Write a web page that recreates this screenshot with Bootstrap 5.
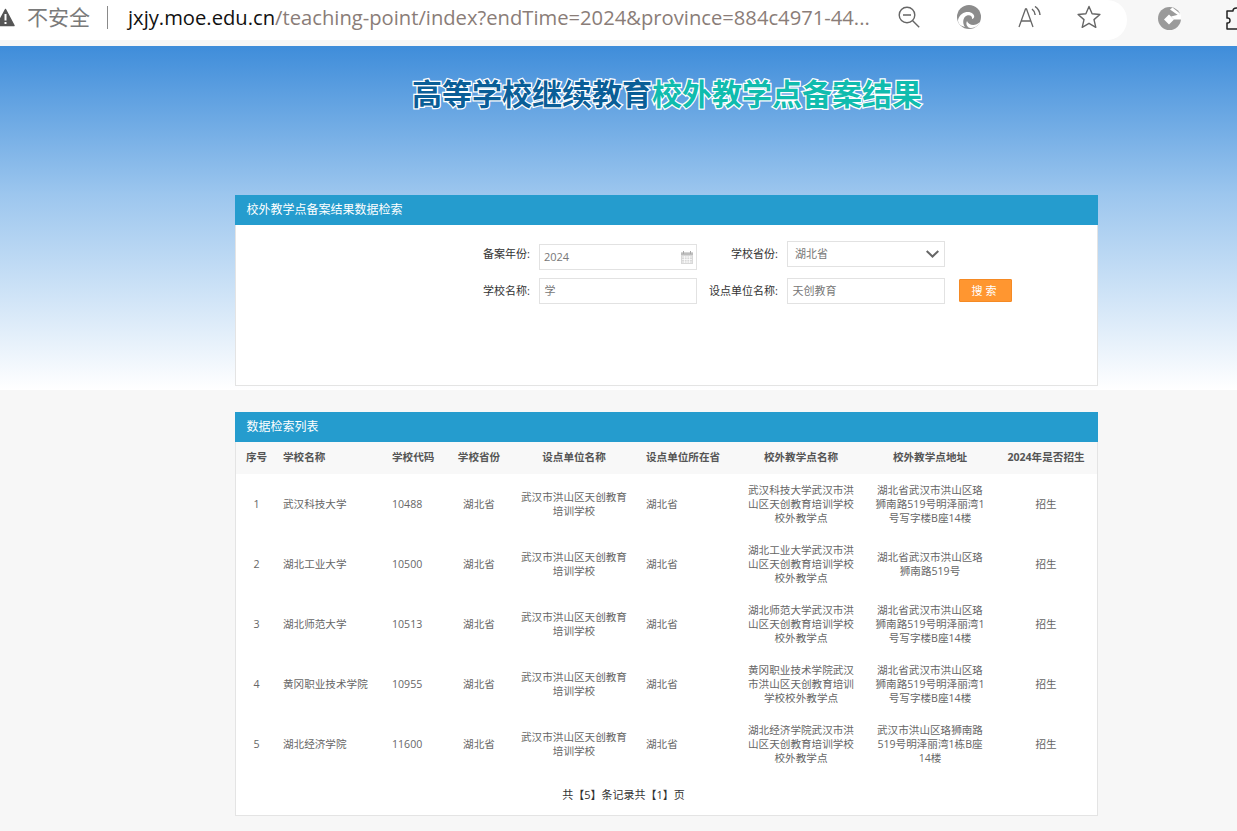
<!DOCTYPE html>
<html lang="zh-CN">
<head>
<meta charset="utf-8">
<title>校外教学点备案结果</title>
<link href="https://cdn.jsdelivr.net/npm/bootstrap@5.3.0/dist/css/bootstrap.min.css" rel="stylesheet">
<style>
html,body{height:100%}
body{margin:0;background:#f7f7f7;font-family:"Open Sans","Noto Sans CJK SC",sans-serif;font-size:11px;color:#666;overflow:hidden}
.chrome{height:46px;background:#f7f7f7;overflow:hidden}
.pill{width:1127px;height:40px;background:#fff;border-radius:0 20px 20px 0;flex:none;padding-bottom:6px}
.warn{margin-left:-4px;flex:none}
.secure{font-size:21px;color:#7a7a7a;margin-left:12px;white-space:nowrap;line-height:1}
.divbar{width:1px;height:23px;background:#8a8a8a;margin:0 20px 0 17px;flex:none}
.url{font-size:20.2px;color:#8a7d78;white-space:nowrap;width:770px;flex:none;line-height:1}
.url b{font-weight:400;color:#111}
.tool-i{display:block;flex:none}
.gap-edge{margin-left:37px}
.gap-read{margin-left:37px}
.gap-star{margin-left:36px}
.gap-bank{margin:7px 0 0 31px}
.gap-puz{margin:7px 0 0 44px}
.hero{height:344px;background:linear-gradient(#3f8dda 0,#9cc6ee 43%,#ffffff 100%)}
.hero-title{height:149px;padding:24px 0 0 97px;text-align:center;font:700 30px/44px "Noto Sans CJK SC",sans-serif;paint-order:stroke fill;-webkit-text-stroke:2.5px #fff;color:#0a5e97;white-space:nowrap}
.hero-title span{color:#10bcae}
.frame{width:863px;margin-left:235px}
.bar{height:30px;background:#259cce;color:#fff;font-size:12px;line-height:30px;padding-left:11.5px}
.search-box{height:161px;background:#fff;border:1px solid #e4e4e4;border-top:0;padding:16px 0 0 194px}
.frow{display:flex;align-items:flex-start;height:37px;color:#333}
.lab1{width:100px;text-align:right;margin-right:9px;line-height:26px}
.lab2{width:81px;text-align:right;margin-right:9px;line-height:26px}
.fld{width:158px;height:26px;border:1px solid #e2e2e2;background:#fff;color:#777;font-size:11px;line-height:24px;padding:0 4.5px;flex:none}
.fld.drop{padding:0 5px 0 7px}
.fld.dated{padding:0 3px 0 4px}
.down3{margin-top:3px}
.go{width:53px;height:23px;border:1px solid #f58a24;background:#ff9630;color:#fff;font-size:11px;line-height:21px;text-align:center;margin-left:14px;margin-top:1px;border-radius:1px;letter-spacing:3px;padding:0}
.result-wrap{margin-top:22px}
.result-box{height:374px;background:#fff;border:1px solid #e4e4e4;border-top:0}
.grid-t{width:861px;table-layout:fixed;border-collapse:collapse;margin:0;font-size:10.6px;color:#666}
.grid-t th{height:32px;background:#f8f8f8;font-size:10.6px;font-weight:700;color:#555;vertical-align:middle;padding:0;white-space:nowrap}
.grid-t td{height:60px;vertical-align:middle;line-height:14px;padding:0 10px;background:#fff;border:0;color:#666}
.cc{text-align:center}
.ll{text-align:left;padding-left:10px!important}
.grid-t .first{padding-left:4px;padding-right:0}
.grid-t .prov{text-align:left;padding-left:8px;padding-right:0}
.pager{text-align:center;color:#333;font-size:11px;line-height:16px;padding:13px 86px 0 0}
</style>
</head>
<body>
<div class="chrome d-flex align-items-start">
  <div class="pill d-flex align-items-center">
    <svg class="warn" width="19" height="19" viewBox="0 0 19 19"><path d="M9.500 1.500 18 17.500H1Z" fill="#555" stroke="#555" stroke-width="1.500" stroke-linejoin="round"/><rect x="8.500" y="6" width="2" height="6.500" fill="#fff"/><rect x="8.500" y="14" width="2" height="2" fill="#fff"/></svg>
    <span class="secure">不安全</span>
    <span class="divbar"></span>
    <span class="url"><b>jxjy.moe.edu.cn</b>/teaching-point/index?endTime=2024&amp;province=884c4971-44...</span>
    <svg class="tool-i" width="22" height="22" viewBox="0 0 22 22" fill="none" stroke="#666" stroke-width="1.4"><circle cx="9" cy="9" r="7.800"/><path d="M5 9h8M14.700 14.700l6.500 6.500"/></svg>
    <svg class="tool-i gap-edge" width="24" height="24" viewBox="0 0 24 24"><circle cx="12" cy="12" r="12" fill="#8c8c8c"/><path d="M1 15C3 7 12 5 16 9c2 2 1.500 4.500-1 5 .5-3-2-4.500-5-3.500C6 12 5 18 8 22c-4-1-7-3-7-7Z" fill="#fff"/><path d="M10 16c1 4 8 6 13 1l-1 2c-3 4-9 5-11 3-2-2-2-4-1-6Z" fill="#fff"/></svg>
    <svg class="tool-i gap-read" width="23" height="22" viewBox="0 0 23 22" fill="none" stroke="#666" stroke-width="1.300"><path d="M1 21 7.500 3h1L15 21M3.500 15h9"/><path d="M14 3c2 1.500 3 3.500 3.200 6M17 0.500c3 2 4.700 5 5 8.500" stroke-width="1.500"/></svg>
    <svg class="tool-i gap-star" width="24" height="24" viewBox="0 0 24 24" fill="none" stroke="#666" stroke-width="1.400" stroke-linejoin="round"><path d="M12 1.500l3.100 7.200 7.800.8-5.900 5.100 1.800 7.700-6.800-4-6.800 4 1.800-7.700L1.100 9.500l7.800-.8Z"/></svg>
  </div>
  <svg class="tool-i gap-bank" width="23" height="23" viewBox="0 0 23 23"><circle cx="11.500" cy="11.500" r="11.500" fill="#9a9a9a"/><path d="M11 7.500 16 12.500 11 17.500 6 12.500Z" fill="#fff"/><path d="M13 9.500 23 7v5.500H16Z" fill="#fff"/><path d="M12 2.500 14.500 0.500 22.500 7 20.500 8.500Z" fill="#fff"/></svg>
  <svg class="tool-i gap-puz" width="22" height="23" viewBox="0 0 22 23" fill="none" stroke="#222" stroke-width="1.500" stroke-linejoin="round"><path d="M8 4c0-4 7-4 6.500 0H20v18H2v-6c4 1 4-6 0-5V4Z"/></svg>
</div>

<div class="hero">
  <div class="hero-title">高等学校继续教育<span>校外教学点备案结果</span></div>
  <div class="frame">
    <div class="bar">校外教学点备案结果数据检索</div>
    <div class="search-box">
      <div class="frow">
        <div class="lab1">备案年份:</div>
        <div class="fld dated down3 d-flex justify-content-between align-items-center">
          <span>2024</span>
          <svg width="12" height="13" viewBox="0 0 12 13"><rect x="0" y="1.500" width="12" height="11.500" fill="#d8d8d8"/><rect x="0" y="1.500" width="12" height="2.500" fill="#bdbdbd"/><path d="M2.500 0v3M9.500 0v3" stroke="#aaa"/><path d="M1 6h10M1 8.500h10M1 11h10M3.500 5v7M6 5v7M8.500 5v7" stroke="#fff" stroke-width=".7"/></svg>
        </div>
        <div class="lab2">学校省份:</div>
        <div class="fld drop d-flex justify-content-between align-items-center">
          <span>湖北省</span>
          <svg width="13" height="8" viewBox="0 0 13 8" fill="none" stroke="#666" stroke-width="2"><path d="M.7 1l5.800 5.500L12.300 1"/></svg>
        </div>
      </div>
      <div class="frow">
        <div class="lab1">学校名称:</div>
        <div class="fld">学</div>
        <div class="lab2">设点单位名称:</div>
        <div class="fld">天创教育</div>
        <button type="button" class="go">搜索</button>
      </div>
    </div>
  </div>
</div>

<div class="frame result-wrap">
  <div class="bar">数据检索列表</div>
  <div class="result-box">
    <table class="grid-t">
      <colgroup><col style="width:37px"><col style="width:109px"><col style="width:66px"><col style="width:62px"><col style="width:128px"><col style="width:99px"><col style="width:128px"><col style="width:130px"><col style="width:102px"></colgroup>
      <thead>
        <tr><th class="cc first">序号</th><th class="ll">学校名称</th><th class="ll">学校代码</th><th class="cc">学校省份</th><th class="cc">设点单位名称</th><th class="prov">设点单位所在省</th><th class="cc">校外教学点名称</th><th class="cc">校外教学点地址</th><th class="cc">2024年是否招生</th></tr>
      </thead>
      <tbody>
        <tr><td class="cc first">1</td><td class="ll">武汉科技大学</td><td class="ll">10488</td><td class="cc">湖北省</td><td class="cc">武汉市洪山区天创教育培训学校</td><td class="prov">湖北省</td><td class="cc">武汉科技大学武汉市洪山区天创教育培训学校校外教学点</td><td class="cc">湖北省武汉市洪山区珞狮南路519号明泽丽湾1号写字楼B座14楼</td><td class="cc">招生</td></tr>
        <tr><td class="cc first">2</td><td class="ll">湖北工业大学</td><td class="ll">10500</td><td class="cc">湖北省</td><td class="cc">武汉市洪山区天创教育培训学校</td><td class="prov">湖北省</td><td class="cc">湖北工业大学武汉市洪山区天创教育培训学校校外教学点</td><td class="cc">湖北省武汉市洪山区珞狮南路519号</td><td class="cc">招生</td></tr>
        <tr><td class="cc first">3</td><td class="ll">湖北师范大学</td><td class="ll">10513</td><td class="cc">湖北省</td><td class="cc">武汉市洪山区天创教育培训学校</td><td class="prov">湖北省</td><td class="cc">湖北师范大学武汉市洪山区天创教育培训学校校外教学点</td><td class="cc">湖北省武汉市洪山区珞狮南路519号明泽丽湾1号写字楼B座14楼</td><td class="cc">招生</td></tr>
        <tr><td class="cc first">4</td><td class="ll">黄冈职业技术学院</td><td class="ll">10955</td><td class="cc">湖北省</td><td class="cc">武汉市洪山区天创教育培训学校</td><td class="prov">湖北省</td><td class="cc">黄冈职业技术学院武汉市洪山区天创教育培训学校校外教学点</td><td class="cc">湖北省武汉市洪山区珞狮南路519号明泽丽湾1号写字楼B座14楼</td><td class="cc">招生</td></tr>
        <tr><td class="cc first">5</td><td class="ll">湖北经济学院</td><td class="ll">11600</td><td class="cc">湖北省</td><td class="cc">武汉市洪山区天创教育培训学校</td><td class="prov">湖北省</td><td class="cc">湖北经济学院武汉市洪山区天创教育培训学校校外教学点</td><td class="cc">武汉市洪山区珞狮南路519号明泽丽湾1栋B座14楼</td><td class="cc">招生</td></tr>
      </tbody>
    </table>
    <div class="pager">共【5】条记录共【1】页</div>
  </div>
</div>
<script src="https://cdn.jsdelivr.net/npm/bootstrap@5.3.0/dist/js/bootstrap.bundle.min.js"></script>
</body>
</html>
